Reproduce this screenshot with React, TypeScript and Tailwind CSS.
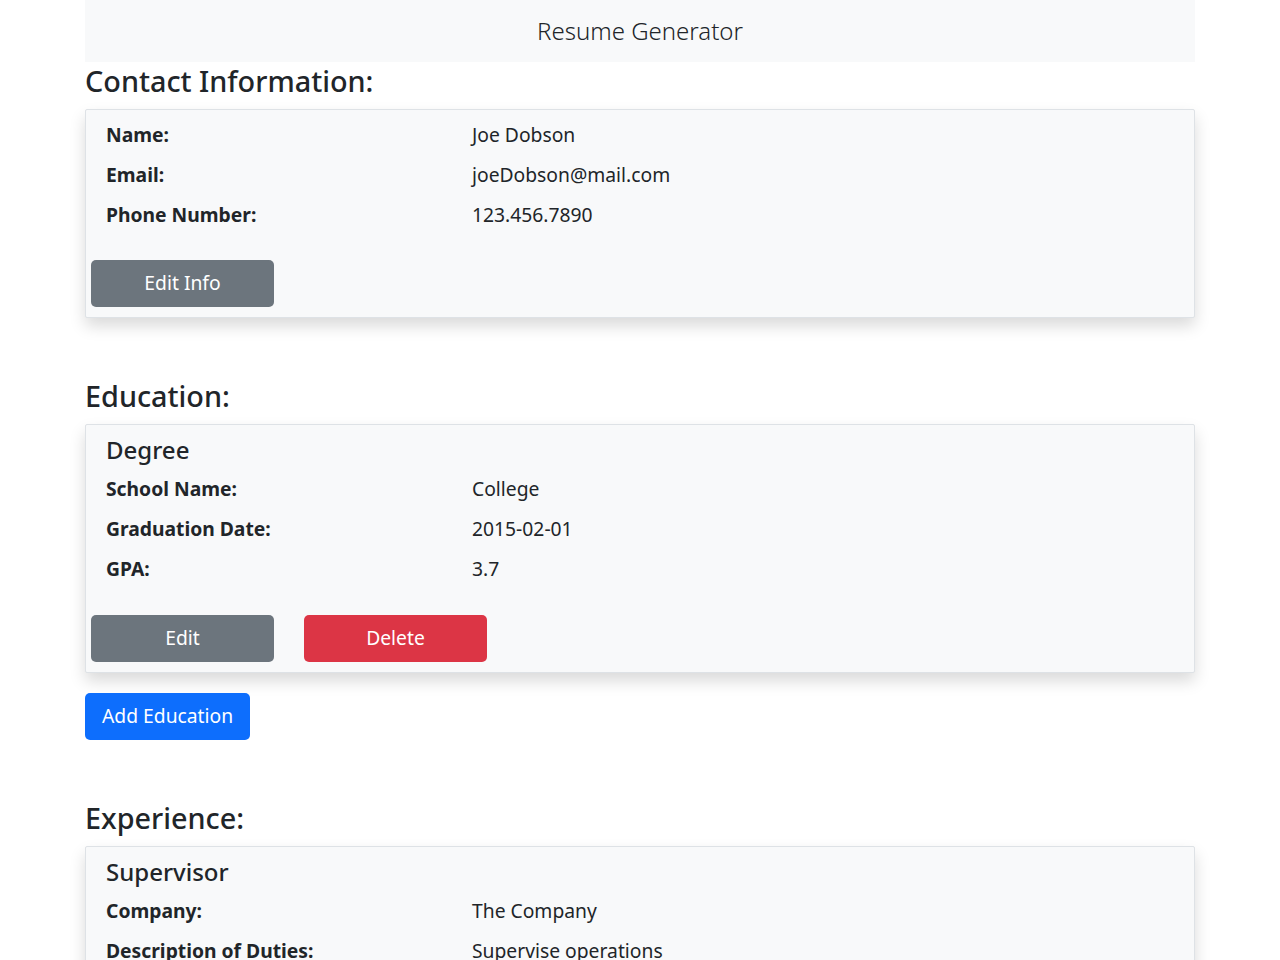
import React from 'react';

type Field = { label: string; value: string };

const font = { fontFamily: '"Noto Sans", "Open Sans", sans-serif' };

function InfoRows({ rows }: { rows: Field[] }) {
  return (
    <div>
      {rows.map((r) => (
        <div key={r.label} className="grid grid-cols-[366px_1fr] h-[40px] items-center pl-[20px] text-[19.3px] text-[#212529]">
          <div className="font-bold">{r.label}</div>
          <div>{r.value}</div>
        </div>
      ))}
    </div>
  );
}

function Btn({ children, color, className = '' }: { children: React.ReactNode; color: string; className?: string }) {
  return (
    <button className={`h-[47px] rounded-[5px] text-white text-[19.3px] ${color} ${className}`}>{children}</button>
  );
}

function SectionTitle({ children }: { children: React.ReactNode }) {
  return <h3 className="h-[34px] leading-[34px] text-[28.8px] font-medium text-[#212529] mb-[11px]">{children}</h3>;
}

function Card({ children }: { children: React.ReactNode }) {
  return (
    <div className="border border-[#dee2e6] bg-[#f8f9fa] rounded-[2px] shadow-[0_0.5rem_1rem_rgba(0,0,0,0.15)] pb-[10px]">
      {children}
    </div>
  );
}

export default function App() {
  return (
    <div className="min-h-[960px] bg-white" style={font}>
      <div className="w-[1110px] mx-auto">
        <nav className="h-[62px] bg-[#f8f9fa] flex items-center justify-center">
          <span className="text-[24px] font-light text-[#212529]">Resume Generator</span>
        </nav>

        <div className="mt-[2px]">
          <SectionTitle>Contact Information:</SectionTitle>
          <Card>
            <div className="pt-[5px]">
              <InfoRows
                rows={[
                  { label: 'Name:', value: 'Joe Dobson' },
                  { label: 'Email:', value: 'joeDobson@mail.com' },
                  { label: 'Phone Number:', value: '123.456.7890' },
                ]}
              />
            </div>
            <div className="flex gap-[30px] pl-[5px] mt-[25px]">
              <Btn color="bg-[#6c757d]" className="w-[183px]">Edit Info</Btn>
            </div>
          </Card>
        </div>

        <div className="mt-[61px]">
          <SectionTitle>Education:</SectionTitle>
          <Card>
            <div className="pl-[20px] pt-[11px] h-[28px] leading-[28px] text-[24px] font-medium text-[#212529] mb-[5px] box-content">Degree</div>
            <InfoRows
              rows={[
                { label: 'School Name:', value: 'College' },
                { label: 'Graduation Date:', value: '2015-02-01' },
                { label: 'GPA:', value: '3.7' },
              ]}
            />
            <div className="flex gap-[30px] pl-[5px] mt-[26px]">
              <Btn color="bg-[#6c757d]" className="w-[183px]">Edit</Btn>
              <Btn color="bg-[#dc3545]" className="w-[183px]">Delete</Btn>
            </div>
          </Card>
          <Btn color="bg-[#0d6efd]" className="mt-[20px] px-[17px]">Add Education</Btn>
        </div>

        <div className="mt-[61px]">
          <SectionTitle>Experience:</SectionTitle>
          <Card>
            <div className="pl-[20px] pt-[11px] h-[28px] leading-[28px] text-[24px] font-medium text-[#212529] mb-[5px] box-content">Supervisor</div>
            <InfoRows
              rows={[
                { label: 'Company:', value: 'The Company' },
                { label: 'Description of Duties:', value: 'Supervise operations' },
                { label: 'Start Date:', value: '2016-01-01' },
                { label: 'End Date:', value: '2020-01-01' },
              ]}
            />
            <div className="flex gap-[30px] pl-[5px] mt-[26px]">
              <Btn color="bg-[#6c757d]" className="w-[183px]">Edit</Btn>
              <Btn color="bg-[#dc3545]" className="w-[183px]">Delete</Btn>
            </div>
          </Card>
        </div>
      </div>
    </div>
  );
}
